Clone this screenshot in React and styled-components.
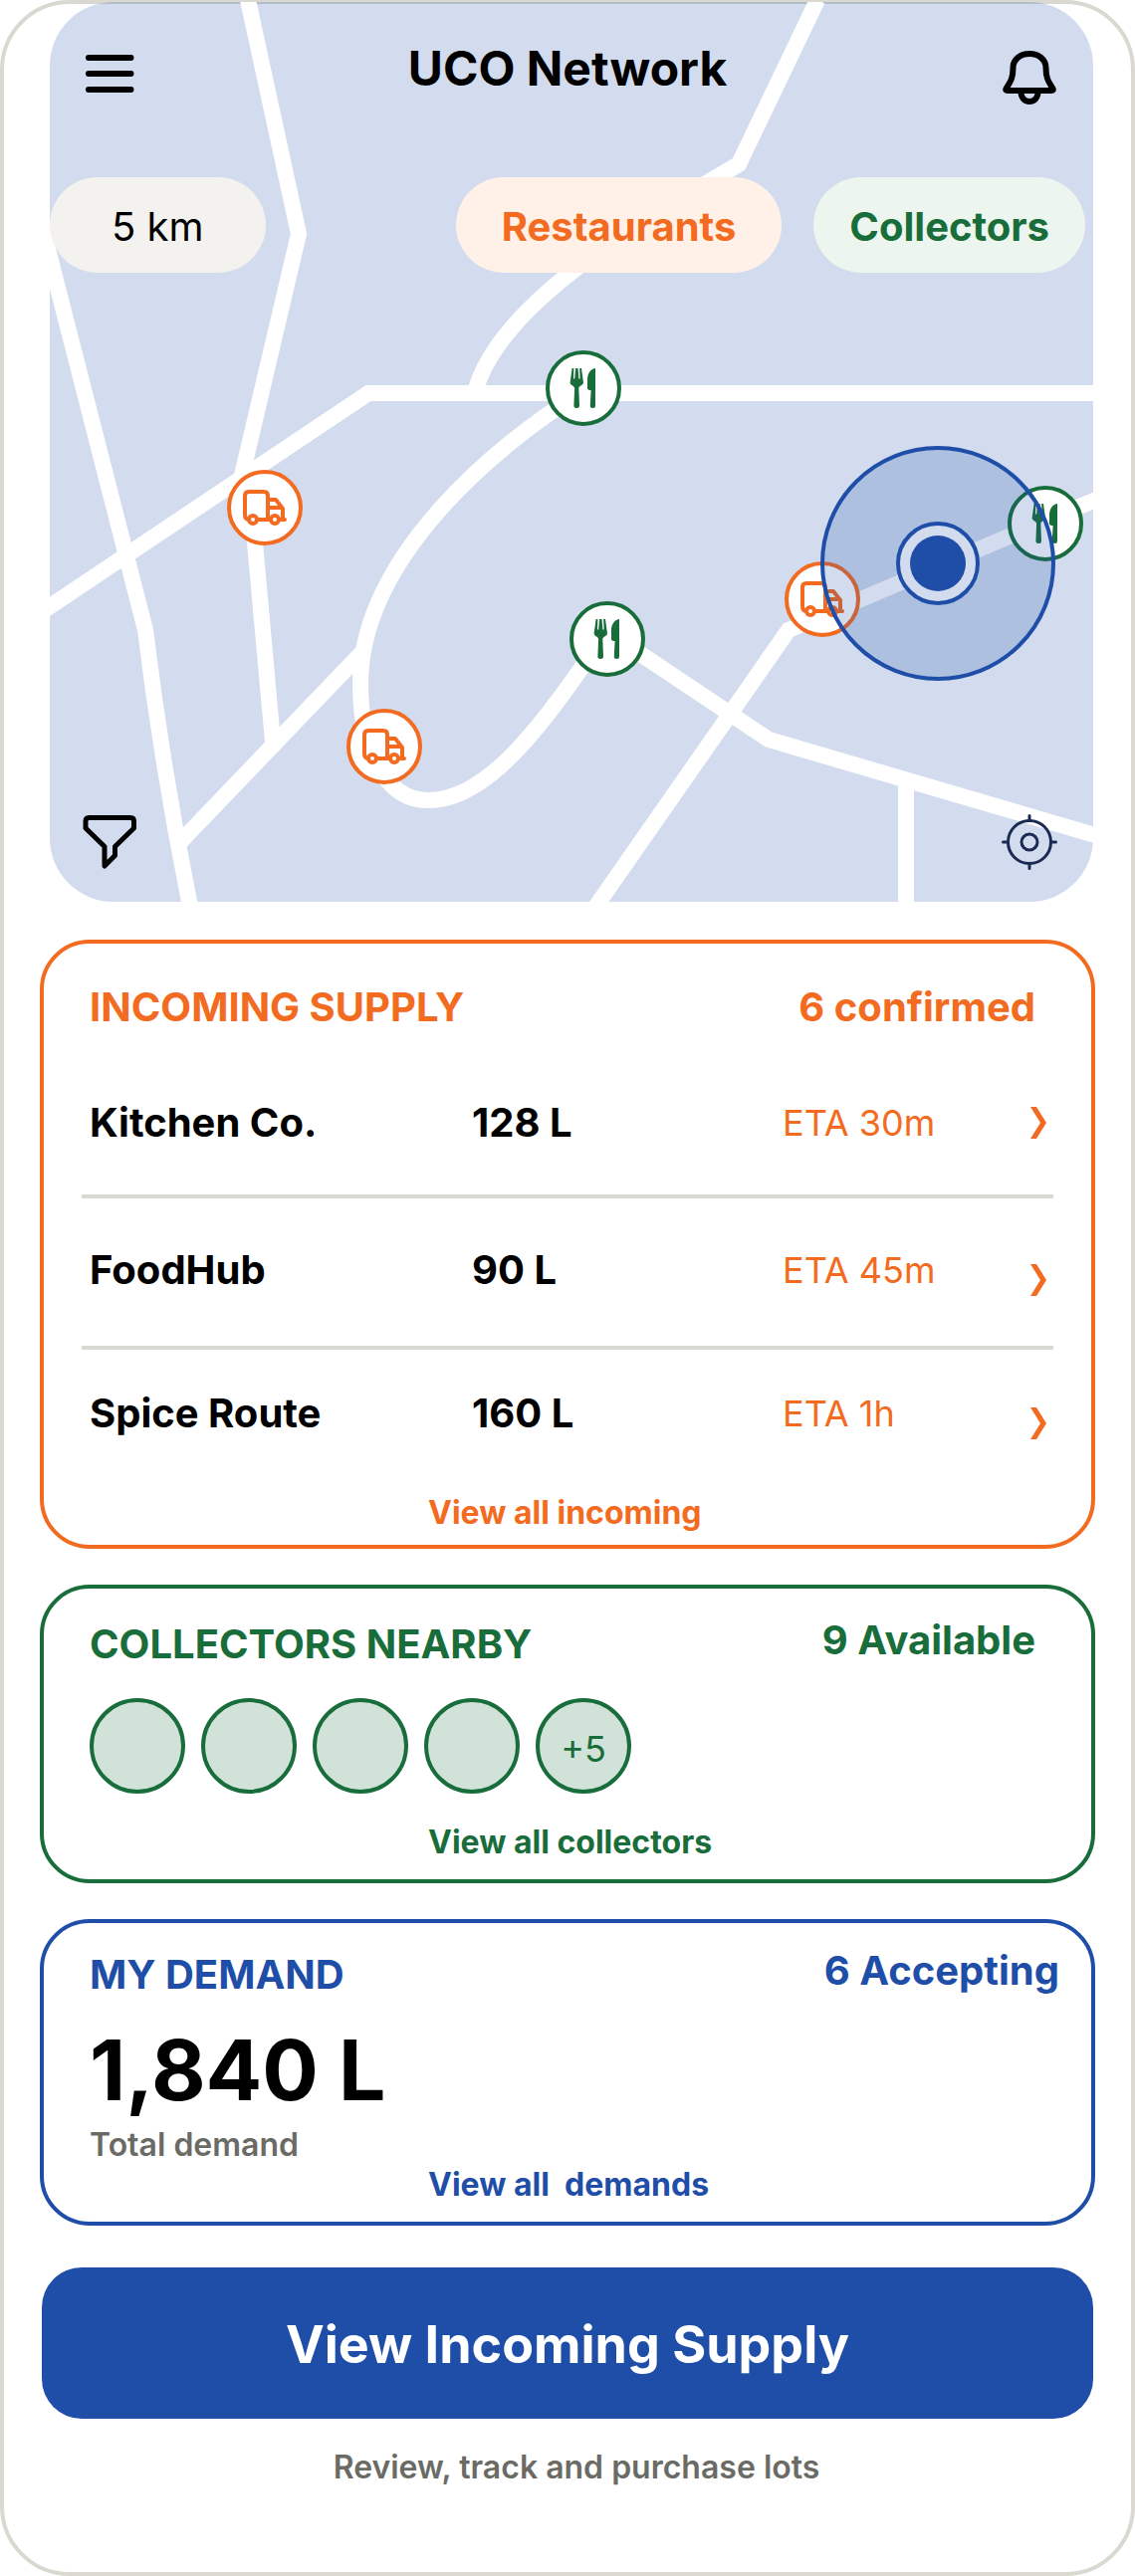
import React from "react"
import styled, { createGlobalStyle } from "styled-components"

const colors = {
  orange: "#f36b21",
  green: "#186d3a",
  blue: "#1f4ea8",
  line: "#d9d9d2",
  muted: "#6b6b66",
}

const GlobalStyle = createGlobalStyle`
  * {
    box-sizing: border-box;
  }
  body {
    margin: 0;
    background: #fff;
    color: #000;
    font-family: Inter, "Liberation Sans", sans-serif;
  }
  h1, h2, p, ul {
    margin: 0;
    padding: 0;
  }
  a {
    color: inherit;
    text-decoration: none;
  }
  button {
    border: none;
    padding: 0;
    background: none;
    color: inherit;
    font-family: inherit;
    cursor: pointer;
  }
`

const Screen = styled.main`
  display: flex;
  flex-direction: column;
  min-height: 100vh;
  border: 4px solid ${colors.line};
  border-radius: 70px;
`

const MapPanel = styled.section`
  position: relative;
  display: flex;
  flex-direction: column;
  min-height: 904px;
  margin: -2px 38px 0 46px;
  padding: 44px 0 30px;
  border-radius: 64px;
  overflow: hidden;
  background: rgba(31, 78, 168, 0.2);
`

const MapCanvas = styled.svg`
  position: absolute;
  inset: 0;
  width: 100%;
  height: 100%;
`

const MapHeader = styled.header`
  position: relative;
  display: flex;
  justify-content: space-between;
  align-items: flex-start;
  padding: 0 38px 0 30px;
`

const MapTitle = styled.h1`
  font-size: 48px;
  line-height: 46px;
  font-weight: 700;
`

const IconButton = styled.button`
  width: 60px;
  height: 60px;

  svg {
    display: block;
    overflow: visible;
  }
`

const Filters = styled.div`
  position: relative;
  display: flex;
  gap: 32px;
  margin-top: 72px;
  padding-right: 8px;
`

const Pill = styled.button`
  height: 96px;
  padding: 2px ${props => props.$space}px 0;
  border-radius: 48px;
  background: ${props => props.$background};
  color: ${props => props.$color};
  font-size: 40px;
  font-weight: ${props => props.$weight || 700};

  &:first-child {
    margin-right: auto;
  }
`

const MapTools = styled.div`
  position: relative;
  display: flex;
  justify-content: space-between;
  margin-top: auto;
  padding: 0 34px 0 30px;
`

const Cards = styled.div`
  display: flex;
  flex-direction: column;
  gap: 36px;
  margin: 38px 36px 0;
`

const Card = styled.section`
  padding: ${props => props.$top}px 0 ${props => props.$bottom}px;
  border: 4px solid ${props => props.$color};
  border-radius: 50px;
`

const CardHead = styled.div`
  display: flex;
  justify-content: space-between;
  align-items: ${props => props.$align || "flex-start"};
  padding: 0 ${props => props.$end}px 0 46px;
  color: ${props => props.$color};
`

const CardTitle = styled.h2`
  font-size: 40px;
  line-height: 48px;
  font-weight: 700;
`

const CardCount = styled.p`
  font-size: 40px;
  line-height: 40px;
  font-weight: 700;
`

const CardLink = styled.a`
  display: block;
  width: fit-content;
  margin: ${props => props.$top}px 0 0 386px;
  color: ${props => props.$color};
  font-size: 32px;
  line-height: 40px;
  font-weight: 700;
  white-space: pre;
`

const SupplyList = styled.ul`
  list-style: none;
  margin: 0 38px;
`

const SupplyItem = styled.li`
  padding: 46px 0 50px;
  border-bottom: 4px solid ${colors.line};

  &:first-child {
    padding: 66px 0 46px;
  }
  &:last-child {
    padding: 38px 0 0;
    border-bottom: none;
  }
`

const SupplyRow = styled.a`
  display: grid;
  grid-template-columns: 384fr 312fr 249fr 16px;
  align-items: center;
  min-height: 52px;
  padding: 0 7px 0 8px;
  font-size: 40px;
  line-height: 48px;
  font-weight: 700;
`

const Eta = styled.span`
  color: ${colors.orange};
  font-size: 36px;
  font-weight: 400;
`

const Chevron = styled.svg`
  display: block;

  ${SupplyItem}:not(:first-child) & {
    align-self: end;
  }
`

const Avatars = styled.div`
  display: flex;
  gap: 16px;
  margin-top: 30px;
  padding-left: 46px;
`

const Avatar = styled.span`
  display: flex;
  align-items: center;
  justify-content: center;
  width: 96px;
  height: 96px;
  padding-top: 6px;
  border: 4px solid ${colors.green};
  border-radius: 50%;
  background: #d1e2d8;
  color: ${colors.green};
  font-size: 36px;
  font-weight: 400;
`

const Total = styled.p`
  margin-top: 30px;
  padding-left: 46px;
  font-size: 84px;
  line-height: 84px;
  font-weight: 700;
`

const TotalLabel = styled.p`
  margin-top: 13px;
  padding-left: 46px;
  color: ${colors.muted};
  font-size: 32px;
  line-height: 40px;
  font-weight: 600;
`

const PrimaryButton = styled.button`
  height: 152px;
  margin: 42px 38px 0;
  padding-top: 2px;
  border-radius: 40px;
  background: ${colors.blue};
  color: #fff;
  font-size: 52px;
  font-weight: 700;
`

const Hint = styled.p`
  margin-top: 29px;
  padding-left: 18px;
  color: ${colors.muted};
  font-size: 32px;
  line-height: 40px;
  font-weight: 600;
  text-align: center;
`

const supplies = [
  { name: "Kitchen Co.", volume: "128 L", eta: "ETA 30m" },
  { name: "FoodHub", volume: "90 L", eta: "ETA 45m" },
  { name: "Spice Route", volume: "160 L", eta: "ETA 1h" },
]

const collectors = ["", "", "", "", "+5"]

const roads = [
  "M249 0 L300 235 L241 486",
  "M251 490 L274 745",
  "M40 616 L370 395 H1110",
  "M30 180 L146 633 Q164 780 193 920",
  "M366 653 L180 847",
  "M586 393 C500 445 362 560 362 687 C362 750 385 804 430 804 C490 804 545 730 612 630",
  "M821 0 L742 165 C620 236 500 310 477 394",
  "M1110 498 L792 633 L592 920",
  "M615 638 L772 743 L1110 842",
  "M910 790 V920",
]

const Truck = ({ x, y }) => (
  <g transform={`translate(${x} ${y})`} fill="none" stroke={colors.orange} strokeWidth="4">
    <circle r="36" fill="#fff" />
    <path
      strokeLinecap="round"
      strokeLinejoin="round"
      d="M-16 12Q-20 12 -20 7V-12Q-20 -16 -16 -16H-1Q3 -16 3 -12V12M-7 12H5M3 -8H11L18 1V12M3 0H17M15 12H20"
    />
    <circle cx="-12" cy="12" r="4" fill="#fff" />
    <circle cx="10" cy="12" r="4" fill="#fff" />
  </g>
)

const Food = ({ x, y }) => (
  <g transform={`translate(${x} ${y})`} fill={colors.green}>
    <circle r="36" fill="#fff" stroke={colors.green} strokeWidth="4" />
    <path d="M-11.4 -20L-13.4 -5.5C-13.2 -3 -9.3 -2.6 -8.9 0L-9.6 17.5Q-9.6 20 -6.8 20Q-4 20 -4 17.5L-4.7 0C-4.3 -2.6 -.2 -3 0 -5.5L-2 -20H-3.8L-3.4 -9.5H-4.6L-5.5 -20H-7.9L-8.8 -9.5H-10L-9.6 -20Z" />
    <path d="M12 -20C6 -19 4 -13 4 -9V0Q4 2 7.6 2L6.8 17.5Q6.8 20 9.4 20Q12 20 12 17.5Z" />
  </g>
)

const CityMap = () => (
  <MapCanvas viewBox="50 2 1048 904" preserveAspectRatio="xMidYMid slice" aria-hidden="true">
    <g fill="none" stroke="#fff" strokeWidth="16">
      {roads.map(d => (
        <path d={d} key={d} />
      ))}
    </g>
    <Food x={586} y={390} />
    <Food x={610} y={642} />
    <Food x={1050} y={526} />
    <Truck x={266} y={510} />
    <Truck x={386} y={750} />
    <Truck x={826} y={602} />
    {/* search radius around the user */}
    <g stroke={colors.blue} strokeWidth="4">
      <circle cx="942" cy="566" r="116" fill={colors.blue} fillOpacity="0.2" />
      <circle cx="942" cy="566" r="40" fill="#d2dcee" />
    </g>
    <circle cx="942" cy="566" r="28" fill={colors.blue} />
  </MapCanvas>
)

const MenuIcon = () => (
  <svg width="60" height="60" viewBox="0 0 60 60" stroke="#000" strokeWidth="6" strokeLinecap="round">
    <path d="M9 12H51.500M9 28H51.500M9 44H51.500" />
  </svg>
)

const BellIcon = () => (
  <svg
    width="60"
    height="60"
    viewBox="0 0 60 60"
    fill="none"
    stroke="#000"
    strokeWidth="6"
    strokeLinejoin="round"
  >
    <path d="M10.500 43C14 37 17.500 34 17.500 22C17.500 13.500 25 8 34 8S50.500 13.500 50.500 22C50.500 34 54 37 57.500 43Q58.500 45 56 45H12Q9.500 45 10.500 43Z" />
    <path d="M25.500 46C25.500 52 29 56 34 56S42.500 52 42.500 46" />
  </svg>
)

const FilterIcon = () => (
  <svg
    width="60"
    height="60"
    viewBox="0 0 60 60"
    fill="none"
    stroke="#000"
    strokeWidth="5"
    strokeLinejoin="round"
  >
    <path d="M9.500 5.500H51Q54.500 5.500 54.500 9V16L35.500 34.500V43.500L25 54V34.500L6 16V9Q6 5.500 9.500 5.500Z" />
  </svg>
)

const LocateIcon = () => (
  <svg
    width="60"
    height="60"
    viewBox="0 0 60 60"
    fill="none"
    stroke="#1b2a52"
    strokeWidth="3"
    strokeLinecap="round"
  >
    <circle cx="30" cy="30" r="21.500" />
    <circle cx="30" cy="30" r="8" />
    <path d="M30 3.500V8M30 52V56.500M3.500 30H8M52 30H56.500" />
  </svg>
)

const App = () => (
  <>
    <GlobalStyle />
    <Screen>
      <MapPanel>
        <CityMap />
        <MapHeader>
          <IconButton aria-label="Menu">
            <MenuIcon />
          </IconButton>
          <MapTitle>UCO Network</MapTitle>
          <IconButton aria-label="Notifications">
            <BellIcon />
          </IconButton>
        </MapHeader>
        <Filters>
          <Pill $background="#f3f2ee" $color="#000" $space={62} $weight={400}>
            5 km
          </Pill>
          <Pill $background="#fff1e7" $color={colors.orange} $space={46}>
            Restaurants
          </Pill>
          <Pill $background="#ecf6ee" $color={colors.green} $space={36}>
            Collectors
          </Pill>
        </Filters>
        <MapTools>
          <IconButton aria-label="Filter">
            <FilterIcon />
          </IconButton>
          <IconButton aria-label="Locate me">
            <LocateIcon />
          </IconButton>
        </MapTools>
      </MapPanel>

      <Cards>
        <Card $color={colors.orange} $top={40} $bottom={12}>
          <CardHead $color={colors.orange} $align="center" $end={56}>
            <CardTitle>INCOMING SUPPLY</CardTitle>
            <CardCount>6 confirmed</CardCount>
          </CardHead>
          <SupplyList>
            {supplies.map(supply => (
              <SupplyItem key={supply.name}>
                <SupplyRow href="#supply">
                  <span>{supply.name}</span>
                  <span>{supply.volume}</span>
                  <Eta>{supply.eta}</Eta>
                  <Chevron width="16" height="32" viewBox="0 0 16 32" fill={colors.orange}>
                    <path d="M0 0H6L16 16L6 32H0L10 16Z" />
                  </Chevron>
                </SupplyRow>
              </SupplyItem>
            ))}
          </SupplyList>
          <CardLink href="#incoming" $color={colors.orange} $top={54}>
            View all incoming
          </CardLink>
        </Card>

        <Card $color={colors.green} $top={32} $bottom={17}>
          <CardHead $color={colors.green} $end={56}>
            <CardTitle>COLLECTORS NEARBY</CardTitle>
            <CardCount>9 Available</CardCount>
          </CardHead>
          <Avatars>
            {collectors.map((label, index) => (
              <Avatar key={index}>{label}</Avatar>
            ))}
          </Avatars>
          <CardLink href="#collectors" $color={colors.green} $top={29}>
            View all collectors
          </CardLink>
        </Card>

        <Card $color={colors.blue} $top={28} $bottom={17}>
          <CardHead $color={colors.blue} $end={32}>
            <CardTitle>MY DEMAND</CardTitle>
            <CardCount>6 Accepting</CardCount>
          </CardHead>
          <Total>1,840 L</Total>
          <TotalLabel>Total demand</TotalLabel>
          <CardLink href="#demands" $color={colors.blue} $top={0}>
            {"View all  demands"}
          </CardLink>
        </Card>
      </Cards>

      <PrimaryButton>View Incoming Supply</PrimaryButton>
      <Hint>Review, track and purchase lots</Hint>
    </Screen>
  </>
)

export default App
